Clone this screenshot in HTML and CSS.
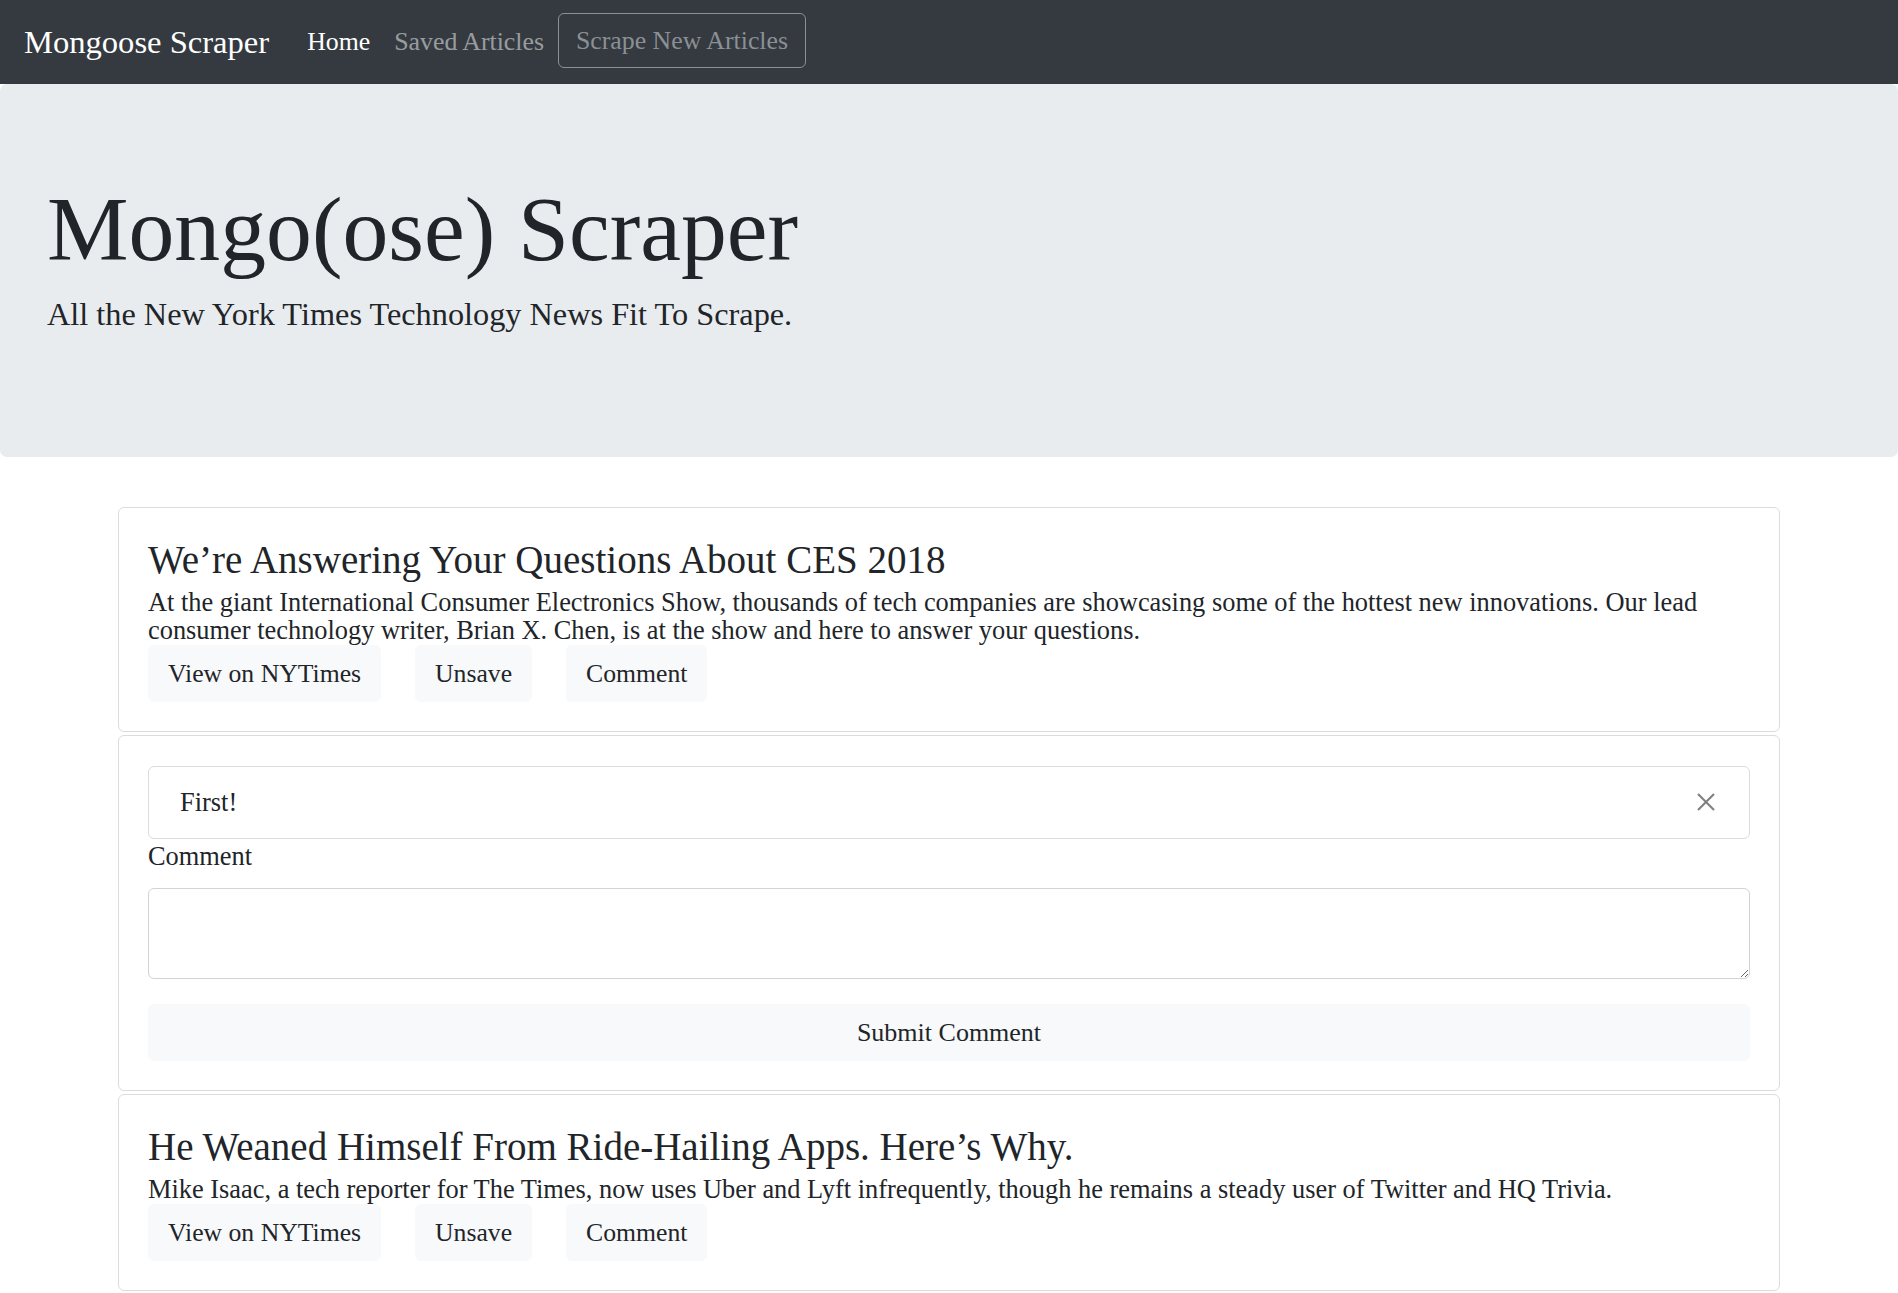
FILE: index.html
```html
<!DOCTYPE html>
<html lang="en">
<head>
<meta charset="utf-8">
<title>Mongoose Scraper</title>
<link rel="stylesheet" href="styles.css">
</head>
<body>
<nav class="navbar">
  <a class="brand" href="#">Mongoose Scraper</a>
  <ul class="nav">
    <li><a class="nav-link active" href="#">Home</a></li>
    <li><a class="nav-link" href="#">Saved Articles</a></li>
  </ul>
  <button class="scrape-btn" type="button">Scrape New Articles</button>
</nav>

<header class="jumbotron">
  <h1 class="display">Mongo(ose) Scraper</h1>
  <p class="lead">All the New York Times Technology News Fit To Scrape.</p>
</header>

<main class="articles">
  <article class="card">
    <h4 class="card-title">We’re Answering Your Questions About CES 2018</h4>
    <p class="card-text">At the giant International Consumer Electronics Show, thousands of tech companies are showcasing some of the hottest new innovations. Our lead consumer technology writer, Brian X. Chen, is at the show and here to answer your questions.</p>
    <div class="actions">
      <button class="btn" type="button">View on NYTimes</button>
      <button class="btn" type="button">Unsave</button>
      <button class="btn" type="button">Comment</button>
    </div>
  </article>

  <section class="card">
    <div class="comment">
      <span>First!</span>
      <svg class="close" width="18" height="18" viewBox="0 0 18 18" aria-label="Delete">
        <line x1="1" y1="1" x2="17" y2="17"/>
        <line x1="17" y1="1" x2="1" y2="17"/>
      </svg>
    </div>
    <label class="label" for="c1">Comment</label>
    <textarea class="textarea" id="c1" rows="2"></textarea>
    <button class="btn submit" type="button">Submit Comment</button>
  </section>

  <article class="card">
    <h4 class="card-title">He Weaned Himself From Ride-Hailing Apps. Here’s Why.</h4>
    <p class="card-text">Mike Isaac, a tech reporter for The Times, now uses Uber and Lyft infrequently, though he remains a steady user of Twitter and HQ Trivia.</p>
    <div class="actions">
      <button class="btn" type="button">View on NYTimes</button>
      <button class="btn" type="button">Unsave</button>
      <button class="btn" type="button">Comment</button>
    </div>
  </article>
</main>
</body>
</html>
```

FILE: styles.css
```css
html, body {
  margin: 0;
  padding: 0;
}

body {
  font-family: "Liberation Serif", "Times New Roman", serif;
  font-size: 26.4px;
  color: #212529;
  background: #fff;
}

/* ---------- navbar ---------- */
.navbar {
  display: flex;
  align-items: center;
  height: 84px;
  box-sizing: border-box;
  padding: 0 24px;
  background: #343a40;
}

.brand {
  font-size: 32.6px;
  line-height: 40px;
  color: #fff;
  text-decoration: none;
  margin-right: 26px;
}

.nav {
  display: flex;
  list-style: none;
  margin: 0;
  padding: 0;
}

.nav-link {
  display: block;
  font-size: 25.8px;
  line-height: 40px;
  padding: 0 12px;
  color: rgba(255, 255, 255, 0.5);
  text-decoration: none;
}

.nav-link.active {
  color: #fff;
}

.scrape-btn {
  margin-left: 2px;
  margin-top: -3px;
  font-family: inherit;
  font-size: 25.8px;
  line-height: 39px;
  padding: 7px 17px;
  border: 1px solid #8b9095;
  border-radius: 6px;
  background: transparent;
  color: #8b9095;
}

/* ---------- jumbotron ---------- */
.jumbotron {
  margin: 0 0 50px;
  padding: 90px 47px 95px;
  background: #e9ecef;
  border-radius: 7px;
}

.display {
  margin: 0 0 7px;
  font-size: 91.7px;
  line-height: 110px;
  font-weight: 400;
}

.lead {
  margin: 0 0 23px;
  font-size: 32.3px;
  line-height: 47.5px;
}

/* ---------- cards ---------- */
.articles {
  width: 1662px;
  margin: 0 auto;
}

.card {
  border: 1px solid #dcdcdc;
  border-radius: 6px;
  padding: 29px;
  margin-bottom: 3px;
}

.card-title {
  margin: 0 0 6px;
  font-size: 39px;
  line-height: 45px;
  font-weight: 400;
}

.card-text {
  margin: 0 0 1px;
  line-height: 28px;
}

.actions {
  display: flex;
  gap: 34px;
}

.btn {
  font-family: inherit;
  font-size: 25.7px;
  line-height: 39px;
  padding: 8px 19px;
  border: 1px solid #f8f9fa;
  border-radius: 6px;
  background: #f8f9fa;
  color: #212529;
}

/* ---------- comment form ---------- */
.comment {
  display: flex;
  justify-content: space-between;
  align-items: center;
  height: 73px;
  box-sizing: border-box;
  margin-top: 1px;
  padding: 0 34px 0 31px;
  border: 1px solid #dcdcdc;
  border-radius: 6px;
  font-size: 26.4px;
}

.close {
  display: block;
  stroke: #808080;
  stroke-width: 2.2;
}

.label {
  display: block;
  line-height: 35px;
  margin-bottom: 14px;
}

.textarea {
  display: block;
  width: 100%;
  height: 91px;
  box-sizing: border-box;
  margin: 0 0 25px;
  padding: 9px 17px;
  border: 1px solid #ced4da;
  border-radius: 6px;
  font-family: inherit;
  font-size: 26px;
  color: #495057;
}

.submit {
  display: block;
  width: 100%;
  font-size: 26px;
}
```
